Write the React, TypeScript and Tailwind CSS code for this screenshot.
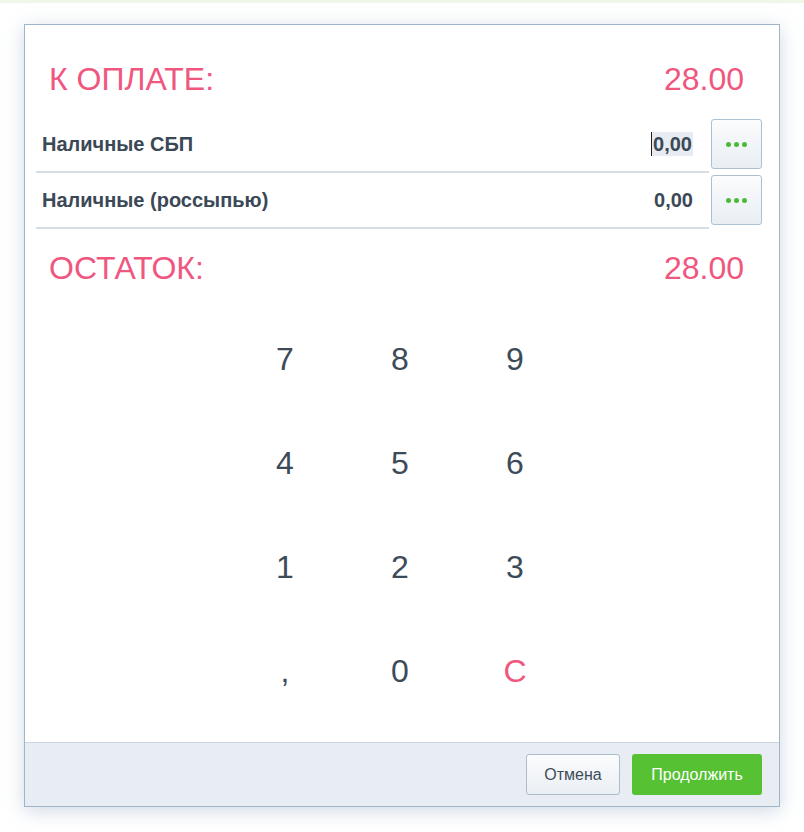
import React, { useState } from 'react';

const PINK = 'text-[#f0577f]';

const payments = [
  { name: 'Наличные СБП', value: '0,00', active: true },
  { name: 'Наличные (россыпью)', value: '0,00', active: false },
];

const keys = ['7', '8', '9', '4', '5', '6', '1', '2', '3', ',', '0', 'C'];

const DotsButton: React.FC = () => (
  <button className="ml-[2px] mt-[2px] flex h-[50px] w-[51px] shrink-0 items-center justify-center gap-[3px] self-start rounded-[3px] border border-[#adc0d0] bg-gradient-to-b from-[#fbfcfd] to-[#e9eef3]">
    <span className="h-[5px] w-[5px] rounded-full bg-[#4cb93b]" />
    <span className="h-[5px] w-[5px] rounded-full bg-[#4cb93b]" />
    <span className="h-[5px] w-[5px] rounded-full bg-[#4cb93b]" />
  </button>
);

const App: React.FC = () => {
  const [input, setInput] = useState('');

  const press = (k: string) => {
    if (k === 'C') setInput('');
    else setInput(input + k);
  };

  return (
    <div className="min-h-[832px] bg-white font-['Liberation_Sans',Arial,sans-serif]">
      <div className="h-[3px] bg-[#eef8e9]" />
      <div className="px-6 pt-[21px]">
        <div className="flex h-[783px] w-[756px] flex-col border border-[#9fb6ca] bg-white shadow-[0_4px_18px_rgba(120,150,180,0.35)]">
          <div className="flex-1">
            {/* total */}
            <div className={`mt-[34px] flex h-[40px] items-center justify-between pl-6 pr-[35px] text-[32px] ${PINK}`}>
              <span>К ОПЛАТЕ:</span>
              <span>28.00</span>
            </div>

            {/* payment rows */}
            <div className="mt-[18px] pl-[11px] pr-[17px]">
              {payments.map((p) => (
                <div key={p.name} className="flex h-[56px]">
                  <div className="flex h-full flex-1 items-center justify-between border-b-2 border-[#d6dee5] pl-[6px] pr-[16px] text-[20px] font-bold text-[#3b4856]">
                    <span>{p.name}</span>
                    {p.active ? (
                      <span className="border-l border-[#222] bg-[#e6ecf2] px-[1px] leading-[24px]">{input || p.value}</span>
                    ) : (
                      <span>{p.value}</span>
                    )}
                  </div>
                  <DotsButton />
                </div>
              ))}
            </div>

            {/* remainder */}
            <div className={`mt-[19px] flex h-[40px] items-center justify-between pl-6 pr-[35px] text-[32px] ${PINK}`}>
              <span>ОСТАТОК:</span>
              <span>28.00</span>
            </div>

            {/* keypad */}
            <div className="mx-auto mt-[19px] grid w-[345px] -translate-x-[2px] grid-cols-3">
              {keys.map((k) => (
                <button
                  key={k}
                  onClick={() => press(k)}
                  className={`flex h-[104px] items-center justify-center text-[32px] ${k === 'C' ? PINK : 'text-[#3d4b59]'}`}
                >
                  {k}
                </button>
              ))}
            </div>
          </div>

          {/* footer */}
          <div className="flex h-[64px] items-center justify-end gap-3 border-t border-[#c9d5df] bg-[#e8edf4] pr-[17px]">
            <button className="h-[41px] w-[94px] rounded-[3px] border border-[#abbdcc] bg-gradient-to-b from-[#fbfcfd] to-[#eaeff4] text-[16px] text-[#3d4b59]">
              Отмена
            </button>
            <button className="h-[41px] w-[130px] rounded-[3px] bg-[#55c133] text-[16px] text-white">
              Продолжить
            </button>
          </div>
        </div>
      </div>
    </div>
  );
};

export default App;
